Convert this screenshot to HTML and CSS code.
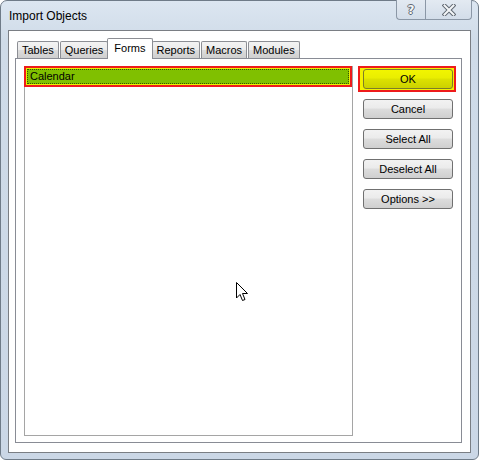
FILE: index.html
```html
<!DOCTYPE html>
<html lang="en">
<head>
  <meta charset="UTF-8" />
  <title>Import Objects</title>
  <link rel="stylesheet" href="styles.css">
</head>
<body>
  <div class="window">
    <div class="titlebar">
      <span class="title">Import Objects</span>
      <div class="caption-btns">
        <div class="cap-btn help"><span class="help-glyph">?</span></div>
        <div class="cap-btn close">
          <svg width="14" height="12" viewBox="0 0 14 12">
            <path d="M2.5 1.5 L11.5 10.5 M11.5 1.5 L2.5 10.5" stroke="#5f6770" stroke-width="4" stroke-linecap="square"/>
            <path d="M2.5 1.5 L11.5 10.5 M11.5 1.5 L2.5 10.5" stroke="#f4f6f8" stroke-width="2" stroke-linecap="square"/>
          </svg>
        </div>
      </div>
    </div>

    <div class="client">
      <div class="tabs">
        <div class="tab">Tables</div>
        <div class="tab">Queries</div>
        <div class="tab active">Forms</div>
        <div class="tab">Reports</div>
        <div class="tab">Macros</div>
        <div class="tab">Modules</div>
      </div>
      <div class="panel">
        <div class="list">
          <div class="item">Calendar</div>
        </div>
        <div class="actions">
          <div class="default-ring"><button class="btn ok">OK</button></div>
          <button class="btn">Cancel</button>
          <button class="btn">Select All</button>
          <button class="btn">Deselect All</button>
          <button class="btn">Options &gt;&gt;</button>
        </div>
      </div>
    </div>

    <svg class="cursor" width="13" height="20" viewBox="0 0 13 20">
      <path d="M0.5 0.5 L0.5 16 L4 12.5 L6.5 18.5 L9 17.5 L6.5 11.5 L11.5 11.5 Z" fill="#fff" stroke="#000" stroke-width="1"/>
    </svg>
  </div>
</body>
</html>
```

FILE: styles.css
```css
body { margin: 0; background: #fff; font-family: "Liberation Sans", Arial, sans-serif; font-size: 11px; color: #000; }
.window { position: relative; width: 479px; height: 460px; box-sizing: border-box; background: linear-gradient(#dce6f1, #cfdbe8 40px, #cbd7e6); border: 1px solid #6f7b88; border-radius: 7px 7px 6px 6px; padding: 0 7px 6px 7px; display: flex; flex-direction: column; }
.titlebar { height: 29px; display: flex; align-items: flex-start; justify-content: space-between; }
.title { font-size: 12px; margin: 8px 0 0 1px; }
.caption-btns { display: flex; margin-right: -1px; margin-top: -1px; }
.cap-btn { height: 20px; box-sizing: border-box; border: 1px solid #8b97a6; border-top: none; background: linear-gradient(#e3eaf2, #d3dde9); display: flex; align-items: center; justify-content: center; }
.help { width: 29px; border-radius: 0 0 0 4px; border-right: none; }
.close { width: 47px; border-radius: 0 0 4px 0; }
.help-glyph { font-family: "DejaVu Sans", sans-serif; font-weight: bold; font-size: 12px; color: #f4f6f8; text-shadow: 1px 0 #5f6770, -1px 0 #5f6770, 0 1px #5f6770, 0 -1px #5f6770; }
.client { flex: 1; background: #fff; border: 1px solid #7a7e84; padding: 7px 8px 9px 6px; display: flex; flex-direction: column; }
.tabs { display: flex; align-items: flex-end; height: 20px; padding-left: 2px; position: relative; z-index: 1; }
.tab { height: 17px; box-sizing: border-box; border: 1px solid #8c8e94; border-bottom: none; margin-right: 1px; padding: 0 4px; line-height: 16px; background: linear-gradient(#f3f3f3, #ebebeb 50%, #dcdcdc 51%, #cfcfcf); border-radius: 2px 2px 0 0; }
.tab.active { height: 21px; background: #fff; margin: 0 -1px 0 -2px; padding: 0 6px; line-height: 18px; position: relative; top: 1px; }
.panel { flex: 1; border: 1px solid #898c95; display: flex; gap: 5px; padding: 7px 5px 6px 8px; }
.list { width: 330px; box-sizing: border-box; border: 1px solid #a5a5a5; padding: 2px 2px; }
.item { position: relative; height: 15px; line-height: 13px; box-sizing: border-box; background: #80c000; border: 1px dotted #385400; padding-left: 2px; box-shadow: 0 0 0 1px #e8f000, 0 0 0 3px #ee1b1b; margin: 0 1px 0 0; }
.actions { display: flex; flex-direction: column; align-items: flex-start; gap: 10px; }
.default-ring { border: 2px solid #ee1b1b; background: #f2f200; padding: 1px 1px 1px 3px; margin-bottom: -3px; }
.btn { width: 90px; height: 20px; font-family: inherit; font-size: 11px; color: #000; border: 1px solid #707070; border-radius: 3px; background: linear-gradient(#f2f2f2, #ebebeb 45%, #dddddd 50%, #cfcfcf); padding: 0; margin-left: 5px; }
.default-ring .btn { margin-left: 0; border-color: #7d7d28; background: linear-gradient(#f2f500, #e9ee00 45%, #dde200 50%, #ccd200); }
.cursor { position: absolute; left: 235px; top: 281px; }
```
